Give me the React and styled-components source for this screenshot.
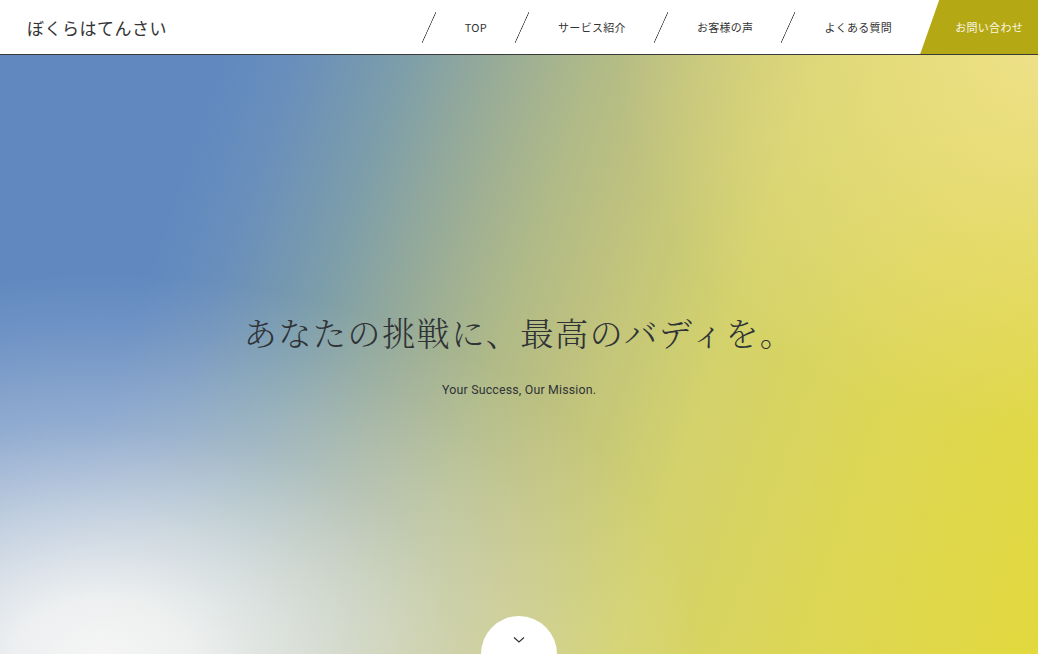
import styled, { createGlobalStyle } from "styled-components";

const GlobalStyle = createGlobalStyle`
  html, body {
    margin: 0;
    padding: 0;
    height: 100%;
    overflow: hidden;
  }
  body {
    font-family: "Noto Sans CJK JP", "Noto Sans", sans-serif;
    color: #333;
  }
`;

const Page = styled.div`
  display: flex;
  flex-direction: column;
  width: 100vw;
  height: 100vh;
`;

const Header = styled.header`
  display: flex;
  align-items: stretch;
  justify-content: space-between;
  height: 54px;
  background: #fff;
  border-bottom: 1px solid #3a3a3a;
  flex-shrink: 0;
`;

const Logo = styled.div`
  display: flex;
  align-items: center;
  padding-left: 27px;
  font-size: 17px;
  letter-spacing: 0.5px;
  color: #333;
`;

const Nav = styled.nav`
  display: flex;
  align-items: stretch;
`;

const NavItem = styled.a`
  display: flex;
  align-items: center;
  flex-shrink: 0;
  white-space: nowrap;
  padding-right: 28px;
  font-size: 11px;
  color: #333;
  text-decoration: none;
  letter-spacing: 0.3px;

  &::before {
    content: "";
    display: block;
    flex-shrink: 0;
    width: 14px;
    height: 31px;
    margin-right: 29px;
    background: linear-gradient(
      to bottom right,
      transparent calc(50% - 0.7px),
      #333 50%,
      transparent calc(50% + 0.7px)
    );
  }
`;

const Contact = styled.a`
  display: flex;
  align-items: center;
  flex-shrink: 0;
  white-space: nowrap;
  padding: 0 15px 0 35px;
  font-size: 11px;
  color: #fbf8e4;
  letter-spacing: 0.3px;
  text-decoration: none;
  background: #b4a915;
  clip-path: polygon(19px 0, 100% 0, 100% 100%, 0 100%);
`;

const Hero = styled.section`
  position: relative;
  flex: 1;
  overflow: hidden;
  display: flex;
  flex-direction: column;
  align-items: center;
  justify-content: center;
  padding-bottom: 4px;
  background:
    radial-gradient(ellipse 600px 380px at 100px 100%, rgba(245, 245, 245, 1) 0%, rgba(245, 245, 243, 0.94) 15%, rgba(243, 243, 240, 0.7) 35%, rgba(240, 240, 240, 0.35) 60%, rgba(240, 240, 240, 0.1) 85%, rgba(240, 240, 240, 0) 100%),
    radial-gradient(ellipse 420px 380px at 100% 0, rgba(240, 226, 145, 0.85) 0%, rgba(238, 224, 140, 0.45) 50%, rgba(236, 222, 140, 0) 100%),
    linear-gradient(109deg, #6189c0 0%, #6189c0 18%, #6a8fbb 24%, #7b9dab 32%, #97ab98 40%, #b0ba88 48%, #c2c47c 56%, #d3d26c 66%, #dcd656 80%, #e2d93e 100%);
`;

const Title = styled.h1`
  margin: 0;
  font-family: "Noto Serif CJK JP", "Noto Serif JP", "Noto Sans CJK JP", serif;
  font-weight: 300;
  font-size: 33.3px;
  letter-spacing: 1.3px;
  color: #2f3336;
`;

const Sub = styled.p`
  margin: 26px 0 0;
  font-family: "Roboto", "Liberation Sans", sans-serif;
  font-size: 13px;
  letter-spacing: 0.2px;
  color: #2f3336;
  transform: scaleX(0.95);
`;

const ScrollButton = styled.button`
  position: absolute;
  left: 50%;
  top: 561px;
  width: 76px;
  height: 76px;
  margin-left: -38px;
  border: none;
  border-radius: 50%;
  background: #fff;
  display: flex;
  justify-content: center;
  padding-top: 20px;
  cursor: pointer;
`;

const navItems = ["TOP", "サービス紹介", "お客様の声", "よくある質問"];

export default function App() {
  return (
    <Page>
      <GlobalStyle />
      <Header>
        <Logo>ぼくらはてんさい</Logo>
        <Nav>
          {navItems.map((item) => (
            <NavItem key={item} href="#">
              {item}
            </NavItem>
          ))}
          <Contact href="#">お問い合わせ</Contact>
        </Nav>
      </Header>
      <Hero>
        <Title>あなたの挑戦に、最高のバディを。</Title>
        <Sub>Your Success, Our Mission.</Sub>
        <ScrollButton aria-label="scroll">
          <svg width="12" height="8" viewBox="0 0 12 8" fill="none">
            <path d="M1 1.5 L6 6 L11 1.5" stroke="#333" strokeWidth="1.2" />
          </svg>
        </ScrollButton>
      </Hero>
    </Page>
  );
}
